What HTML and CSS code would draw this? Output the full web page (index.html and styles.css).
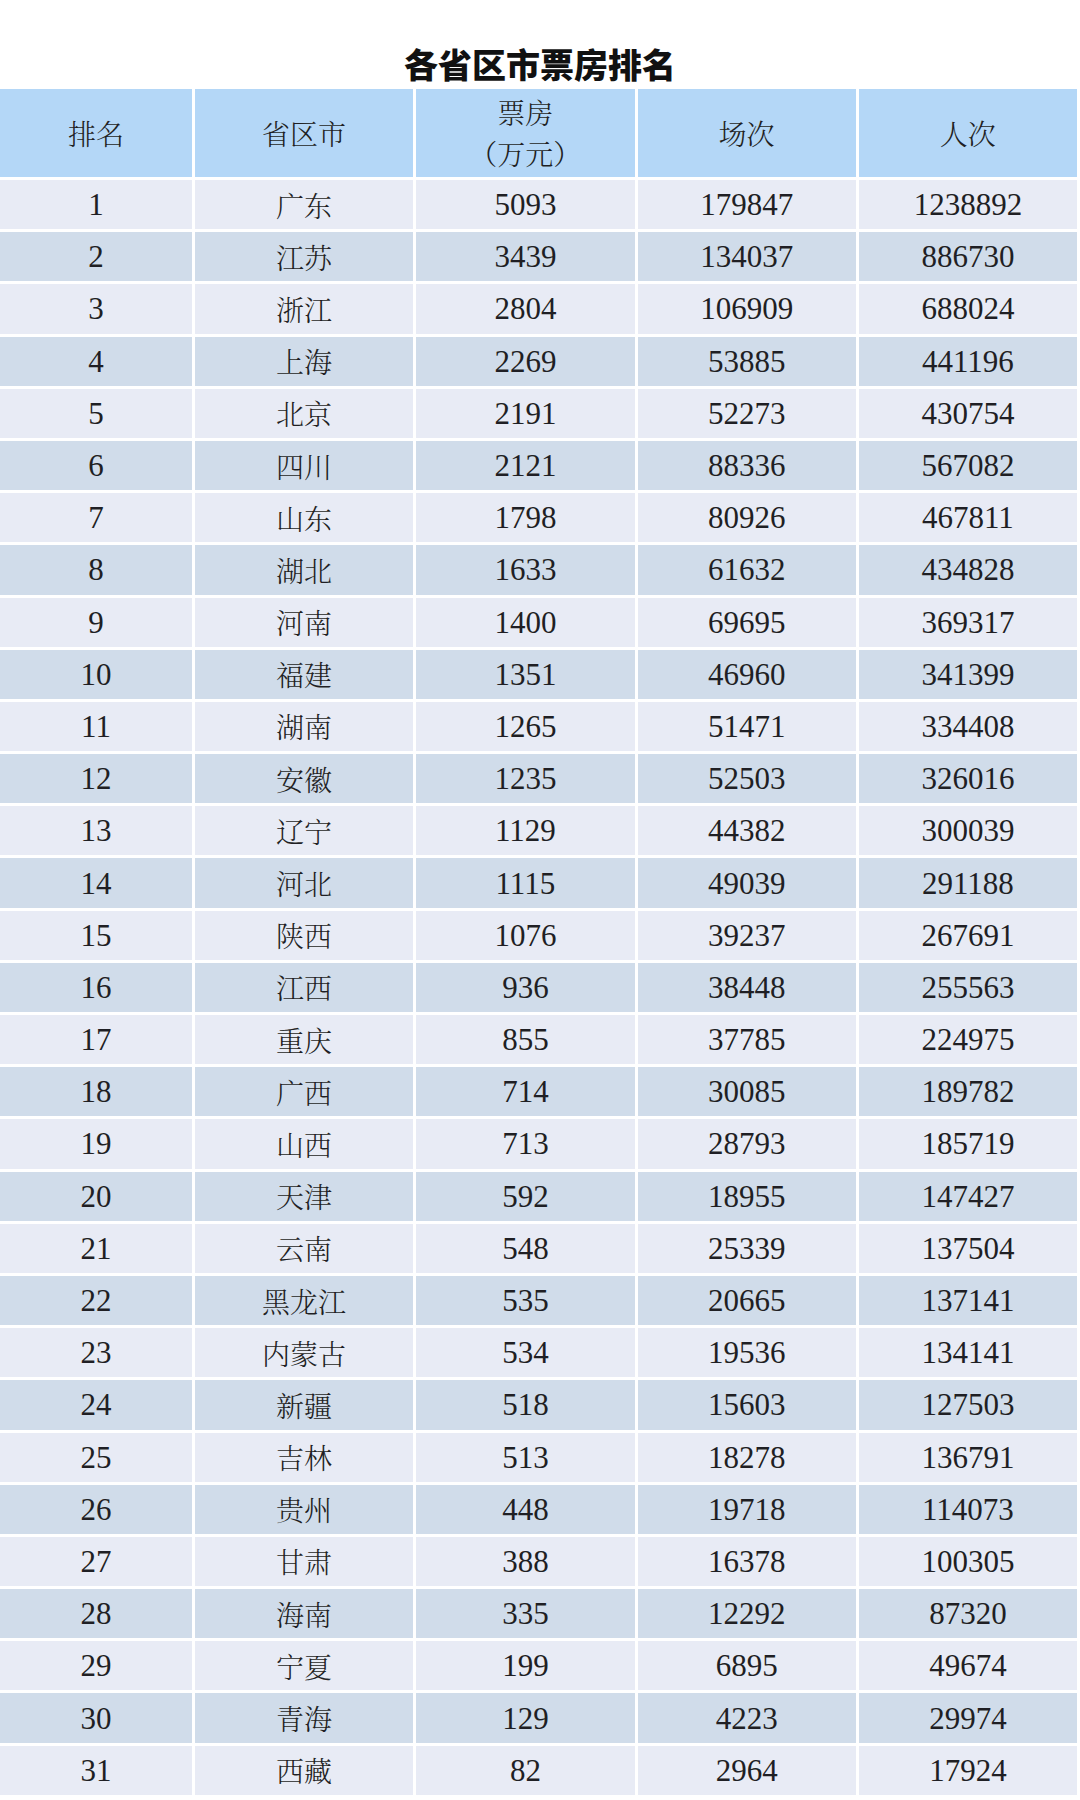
FILE: index.html
```html
<!DOCTYPE html>
<html lang="zh-CN">
<head>
<meta charset="utf-8">
<title>各省区市票房排名</title>
<link rel="stylesheet" href="styles.css">
</head>
<body>
<h1 class="title">各省区市票房排名</h1>
<div class="table">
  <div class="cell head">排名</div>
  <div class="cell head">省区市</div>
  <div class="cell head two"><span class="line">票房</span><span class="line">（万元）</span></div>
  <div class="cell head">场次</div>
  <div class="cell head">人次</div>

  <div class="cell odd num">1</div><div class="cell odd">广东</div><div class="cell odd num">5093</div><div class="cell odd num">179847</div><div class="cell odd num">1238892</div>
  <div class="cell even num">2</div><div class="cell even">江苏</div><div class="cell even num">3439</div><div class="cell even num">134037</div><div class="cell even num">886730</div>
  <div class="cell odd num">3</div><div class="cell odd">浙江</div><div class="cell odd num">2804</div><div class="cell odd num">106909</div><div class="cell odd num">688024</div>
  <div class="cell even num">4</div><div class="cell even">上海</div><div class="cell even num">2269</div><div class="cell even num">53885</div><div class="cell even num">441196</div>
  <div class="cell odd num">5</div><div class="cell odd">北京</div><div class="cell odd num">2191</div><div class="cell odd num">52273</div><div class="cell odd num">430754</div>
  <div class="cell even num">6</div><div class="cell even">四川</div><div class="cell even num">2121</div><div class="cell even num">88336</div><div class="cell even num">567082</div>
  <div class="cell odd num">7</div><div class="cell odd">山东</div><div class="cell odd num">1798</div><div class="cell odd num">80926</div><div class="cell odd num">467811</div>
  <div class="cell even num">8</div><div class="cell even">湖北</div><div class="cell even num">1633</div><div class="cell even num">61632</div><div class="cell even num">434828</div>
  <div class="cell odd num">9</div><div class="cell odd">河南</div><div class="cell odd num">1400</div><div class="cell odd num">69695</div><div class="cell odd num">369317</div>
  <div class="cell even num">10</div><div class="cell even">福建</div><div class="cell even num">1351</div><div class="cell even num">46960</div><div class="cell even num">341399</div>
  <div class="cell odd num">11</div><div class="cell odd">湖南</div><div class="cell odd num">1265</div><div class="cell odd num">51471</div><div class="cell odd num">334408</div>
  <div class="cell even num">12</div><div class="cell even">安徽</div><div class="cell even num">1235</div><div class="cell even num">52503</div><div class="cell even num">326016</div>
  <div class="cell odd num">13</div><div class="cell odd">辽宁</div><div class="cell odd num">1129</div><div class="cell odd num">44382</div><div class="cell odd num">300039</div>
  <div class="cell even num">14</div><div class="cell even">河北</div><div class="cell even num">1115</div><div class="cell even num">49039</div><div class="cell even num">291188</div>
  <div class="cell odd num">15</div><div class="cell odd">陕西</div><div class="cell odd num">1076</div><div class="cell odd num">39237</div><div class="cell odd num">267691</div>
  <div class="cell even num">16</div><div class="cell even">江西</div><div class="cell even num">936</div><div class="cell even num">38448</div><div class="cell even num">255563</div>
  <div class="cell odd num">17</div><div class="cell odd">重庆</div><div class="cell odd num">855</div><div class="cell odd num">37785</div><div class="cell odd num">224975</div>
  <div class="cell even num">18</div><div class="cell even">广西</div><div class="cell even num">714</div><div class="cell even num">30085</div><div class="cell even num">189782</div>
  <div class="cell odd num">19</div><div class="cell odd">山西</div><div class="cell odd num">713</div><div class="cell odd num">28793</div><div class="cell odd num">185719</div>
  <div class="cell even num">20</div><div class="cell even">天津</div><div class="cell even num">592</div><div class="cell even num">18955</div><div class="cell even num">147427</div>
  <div class="cell odd num">21</div><div class="cell odd">云南</div><div class="cell odd num">548</div><div class="cell odd num">25339</div><div class="cell odd num">137504</div>
  <div class="cell even num">22</div><div class="cell even">黑龙江</div><div class="cell even num">535</div><div class="cell even num">20665</div><div class="cell even num">137141</div>
  <div class="cell odd num">23</div><div class="cell odd">内蒙古</div><div class="cell odd num">534</div><div class="cell odd num">19536</div><div class="cell odd num">134141</div>
  <div class="cell even num">24</div><div class="cell even">新疆</div><div class="cell even num">518</div><div class="cell even num">15603</div><div class="cell even num">127503</div>
  <div class="cell odd num">25</div><div class="cell odd">吉林</div><div class="cell odd num">513</div><div class="cell odd num">18278</div><div class="cell odd num">136791</div>
  <div class="cell even num">26</div><div class="cell even">贵州</div><div class="cell even num">448</div><div class="cell even num">19718</div><div class="cell even num">114073</div>
  <div class="cell odd num">27</div><div class="cell odd">甘肃</div><div class="cell odd num">388</div><div class="cell odd num">16378</div><div class="cell odd num">100305</div>
  <div class="cell even num">28</div><div class="cell even">海南</div><div class="cell even num">335</div><div class="cell even num">12292</div><div class="cell even num">87320</div>
  <div class="cell odd num">29</div><div class="cell odd">宁夏</div><div class="cell odd num">199</div><div class="cell odd num">6895</div><div class="cell odd num">49674</div>
  <div class="cell even num">30</div><div class="cell even">青海</div><div class="cell even num">129</div><div class="cell even num">4223</div><div class="cell even num">29974</div>
  <div class="cell odd num">31</div><div class="cell odd">西藏</div><div class="cell odd num">82</div><div class="cell odd num">2964</div><div class="cell odd num">17924</div>
</div>
</body>
</html>
```
FILE: styles.css
```css
html, body {
  margin: 0;
  padding: 0;
  background: #ffffff;
}

body {
  width: 1080px;
  font-family: "Liberation Serif", "Noto Serif CJK SC", "Noto Sans CJK SC", serif;
  color: #1f1f24;
}

.title {
  margin: 0;
  height: 89px;
  box-sizing: border-box;
  padding-bottom: 5px;
  display: flex;
  align-items: flex-end;
  justify-content: center;
  font-family: "Noto Sans CJK SC", sans-serif;
  font-weight: 900;
  font-size: 34px;
  line-height: 40px;
  color: #111111;
}

.table {
  display: grid;
  width: 1077px;
  grid-template-columns: 192px repeat(4, 1fr);
  grid-template-rows: 88px;
  grid-auto-rows: 49.2px;
  gap: 3px;
}

.cell {
  display: flex;
  align-items: center;
  justify-content: center;
  font-size: 28px;
  font-family: "Noto Serif CJK SC", "Noto Sans CJK SC", serif;
  font-weight: 300;
  line-height: 1;
  color: #1f1f24;
}

.cell.num {
  font-family: "Liberation Serif", serif;
  font-weight: 400;
  font-size: 31px;
}

.head {
  background: #b4d7f7;
}

.head.two {
  flex-direction: column;
}

.line {
  display: block;
  line-height: 41px;
}

.odd {
  background: #e8ebf5;
}

.even {
  background: #d0dcea;
}
```
